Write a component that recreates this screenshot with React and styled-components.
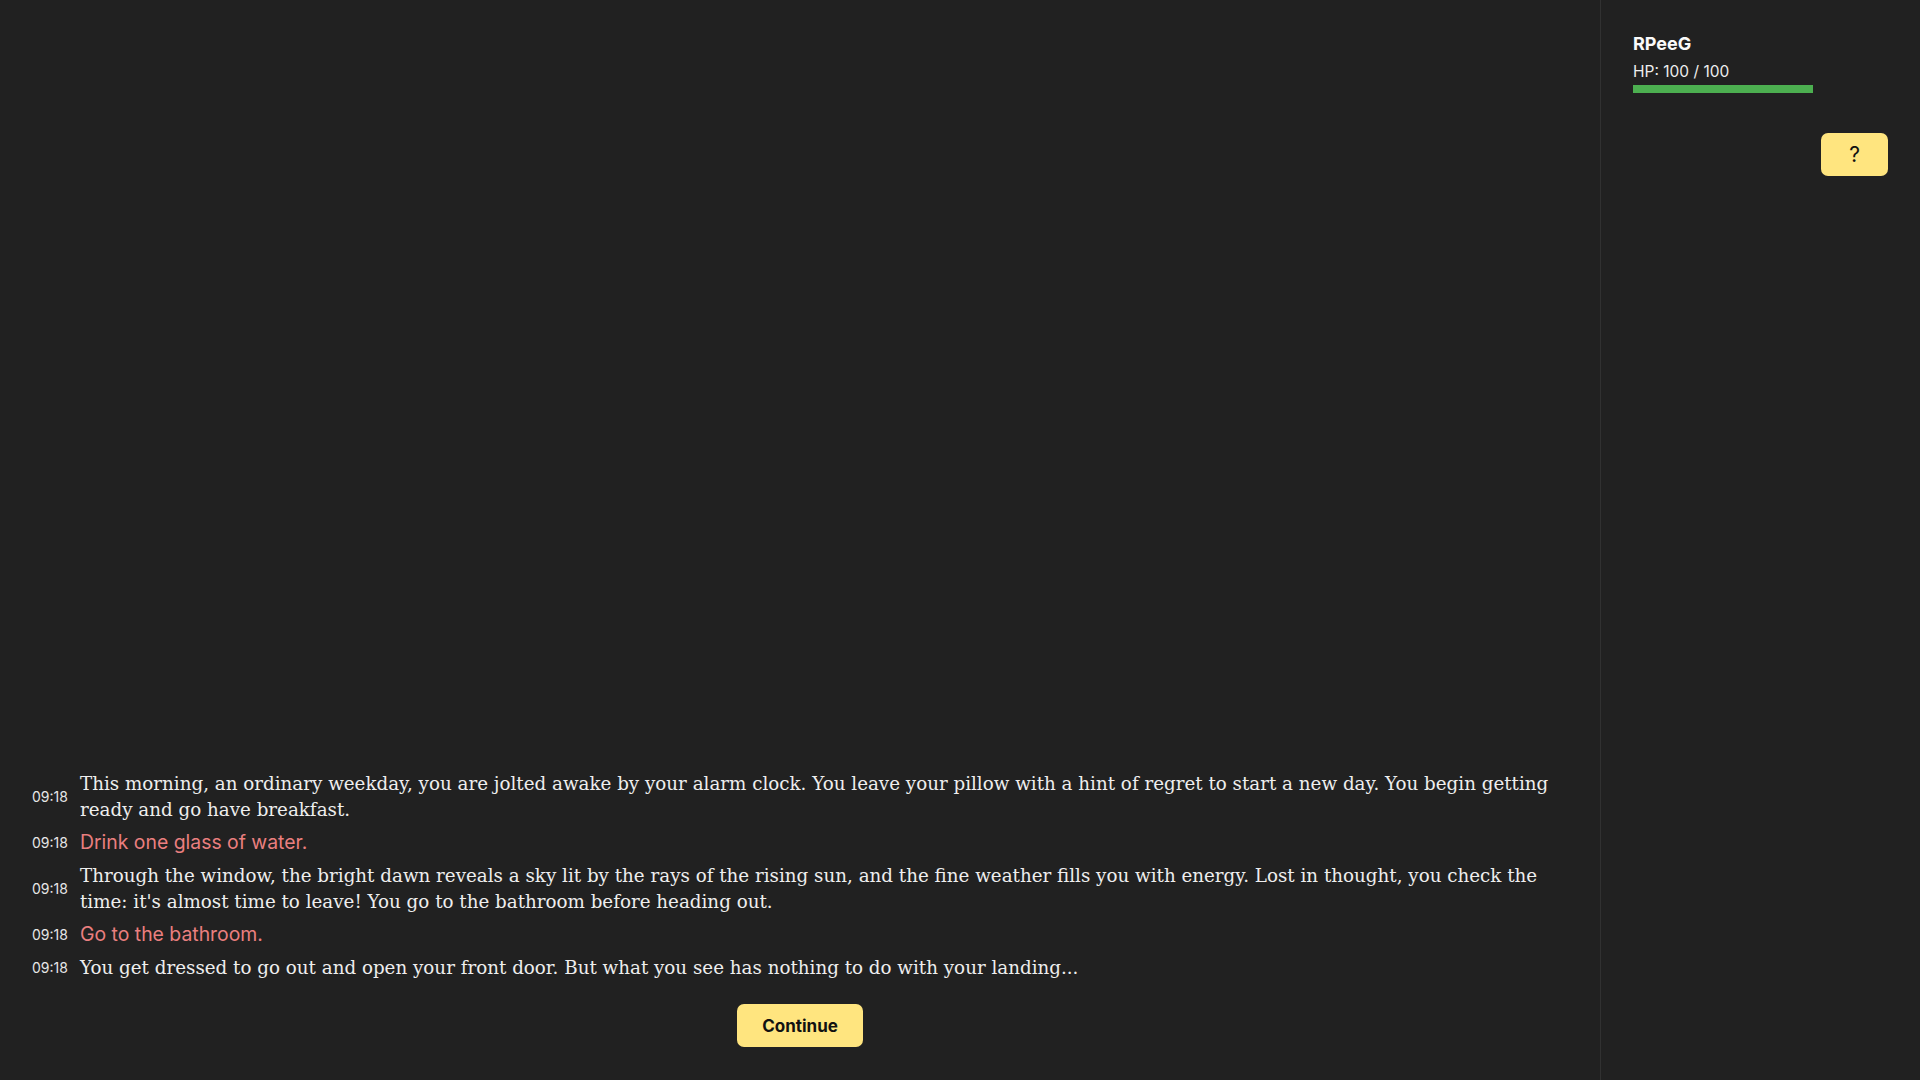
import styled, { createGlobalStyle } from "styled-components";

const GlobalStyle = createGlobalStyle`
  * { box-sizing: border-box; }
  html, body { margin: 0; padding: 0; height: 100%; }
  body {
    background: #212121;
    color: #eeeeee;
    font-family: Inter, "Noto Sans", sans-serif;
  }
  #root { height: 100%; }
`;

const log = [
  { time: "09:18", kind: "story", text: "This morning, an ordinary weekday, you are jolted awake by your alarm clock. You leave your pillow with a hint of regret to start a new day. You begin getting ready and go have breakfast." },
  { time: "09:18", kind: "choice", text: "Drink one glass of water." },
  { time: "09:18", kind: "story", text: "Through the window, the bright dawn reveals a sky lit by the rays of the rising sun, and the fine weather fills you with energy. Lost in thought, you check the time: it's almost time to leave! You go to the bathroom before heading out." },
  { time: "09:18", kind: "choice", text: "Go to the bathroom." },
  { time: "09:18", kind: "story", text: "You get dressed to go out and open your front door. But what you see has nothing to do with your landing..." },
];

function App() {
  const hp = 100;
  const maxHp = 100;

  return (
    <>
      <GlobalStyle />
      <Layout>
        <Main>
          <Log>
            {log.map((entry, i) => (
              <Entry key={i}>
                <Time>{entry.time}</Time>
                <Line $choice={entry.kind === "choice"}>{entry.text}</Line>
              </Entry>
            ))}
          </Log>
          <Actions>
            <YellowButton $wide>Continue</YellowButton>
          </Actions>
        </Main>
        <Sidebar>
          <Name>RPeeG</Name>
          <Hp>HP: {hp} / {maxHp}</Hp>
          <HpBar>
            <HpFill style={{ width: `${(hp / maxHp) * 100}%` }} />
          </HpBar>
          <HelpRow>
            <YellowButton>?</YellowButton>
          </HelpRow>
        </Sidebar>
      </Layout>
    </>
  );
}

export default App;

const Layout = styled.div`
  display: flex;
  height: 100vh;
`;

const Main = styled.div`
  flex: 1;
  display: flex;
  flex-direction: column;
  justify-content: flex-end;
  padding: 32px 32px 33px 32px;
`;

const Log = styled.div`
  display: flex;
  flex-direction: column;
  gap: 7px;
`;

const Entry = styled.div`
  display: flex;
  align-items: center;
  gap: 13px;
`;

const Time = styled.span`
  flex: none;
  width: 35px;
  font-size: 14px;
  color: #e6e6e6;
`;

const Line = styled.p`
  margin: 0;
  font-family: ${(p) => (p.$choice ? 'Inter, "Noto Sans", sans-serif' : '"DejaVu Serif", "Liberation Serif", serif')};
  font-size: ${(p) => (p.$choice ? "19.4px" : "18.3px")};
  line-height: 26px;
  padding-top: ${(p) => (p.$choice ? "0" : "1px")};
  margin-bottom: ${(p) => (p.$choice ? "0" : "-1px")};
  color: ${(p) => (p.$choice ? "#ea7f7f" : "#eeeeee")};
`;

const Actions = styled.div`
  display: flex;
  justify-content: center;
  margin-top: 24px;
`;

const YellowButton = styled.button`
  background: #ffe57f;
  color: #111;
  border: none;
  border-radius: 7px;
  height: 43px;
  padding: ${(p) => (p.$wide ? "0 25px" : "0 28px")};
  font-family: Inter, "Noto Sans", sans-serif;
  font-size: ${(p) => (p.$wide ? "17px" : "21px")};
  font-weight: ${(p) => (p.$wide ? 700 : 400)};
  cursor: pointer;
`;

const Sidebar = styled.aside`
  flex: none;
  width: 320px;
  border-left: 1px solid #313131;
  padding: 33px 32px 32px 32px;
  display: flex;
  flex-direction: column;
`;

const Name = styled.div`
  font-size: 18px;
  font-weight: 700;
  color: #fafafa;
  line-height: 22px;
`;

const Hp = styled.div`
  font-size: 15.5px;
  color: #eeeeee;
  margin-top: 7px;
  line-height: 20px;
`;

const HpBar = styled.div`
  width: 180px;
  height: 8px;
  margin-top: 3px;
  background: #333;
`;

const HpFill = styled.div`
  height: 100%;
  background: #4caf50;
`;

const HelpRow = styled.div`
  display: flex;
  justify-content: flex-end;
  margin-top: 40px;
`;
